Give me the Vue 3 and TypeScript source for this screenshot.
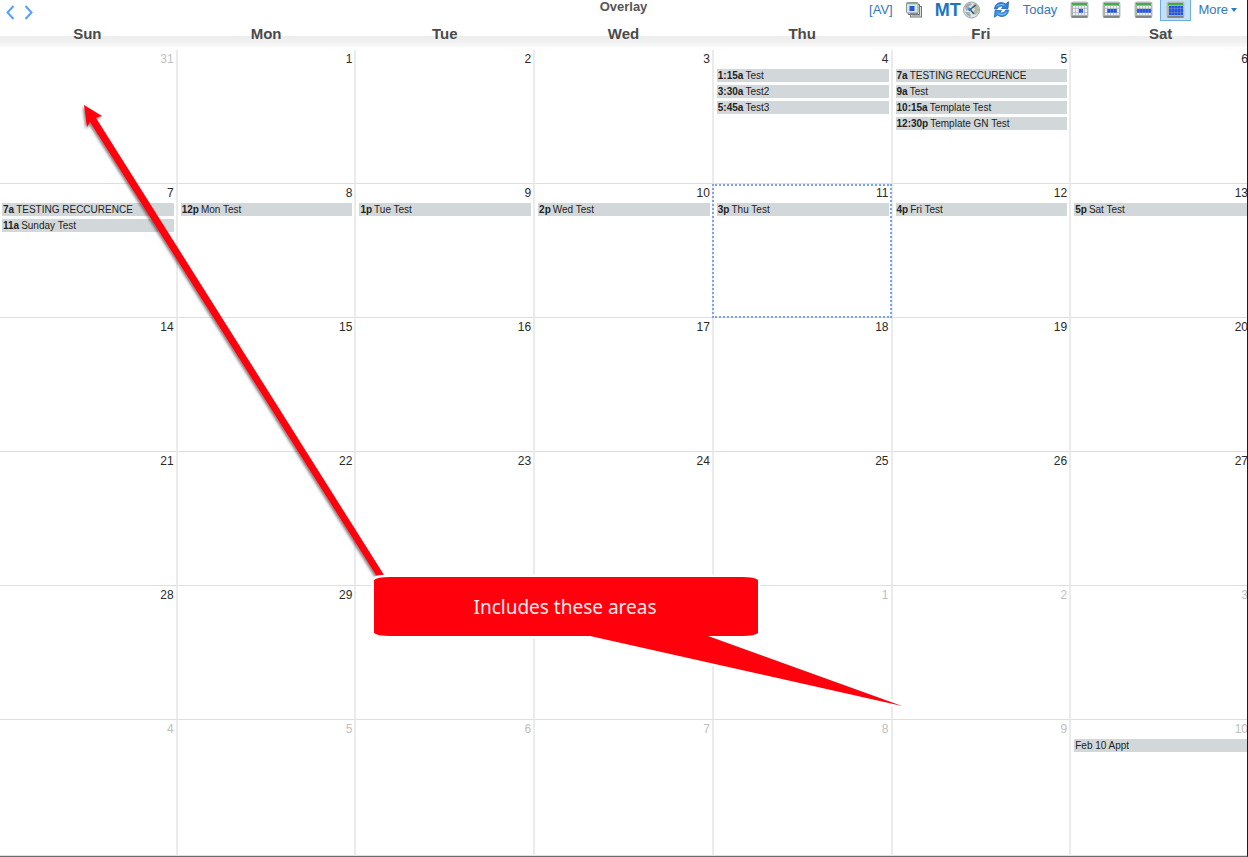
<script setup lang="ts">
interface CalendarEvent {
  time?: string
  title: string
}

interface Day {
  label: string
  outside: boolean
  today: boolean
  events: CalendarEvent[]
}

interface ViewMode {
  name: string
  from: number
  cols: number
  row: number
  rows: number
  active: boolean
}

const weekdays: string[] = ['Sun', 'Mon', 'Tue', 'Wed', 'Thu', 'Fri', 'Sat']

const eventsByCell: Record<number, CalendarEvent[]> = {
  4: [
    { time: '1:15a', title: 'Test' },
    { time: '3:30a', title: 'Test2' },
    { time: '5:45a', title: 'Test3' },
  ],
  5: [
    { time: '7a', title: 'TESTING RECCURENCE' },
    { time: '9a', title: 'Test' },
    { time: '10:15a', title: 'Template Test' },
    { time: '12:30p', title: 'Template GN Test' },
  ],
  7: [
    { time: '7a', title: 'TESTING RECCURENCE' },
    { time: '11a', title: 'Sunday Test' },
  ],
  8: [{ time: '12p', title: 'Mon Test' }],
  9: [{ time: '1p', title: 'Tue Test' }],
  10: [{ time: '2p', title: 'Wed Test' }],
  11: [{ time: '3p', title: 'Thu Test' }],
  12: [{ time: '4p', title: 'Fri Test' }],
  13: [{ time: '5p', title: 'Sat Test' }],
  41: [{ title: 'Feb 10 Appt' }],
}

const monthLength = 31

// Days whose number lies behind the callout box.
const covered = [30, 31]

function labelOf(cell: number): string {
  if (covered.includes(cell)) return ''
  if (cell < 1) return '31'
  return String(cell > monthLength ? cell - monthLength : cell)
}

function makeDay(cell: number): Day {
  return {
    label: labelOf(cell),
    outside: cell < 1 || cell > monthLength,
    today: cell === 11,
    events: eventsByCell[cell] ?? [],
  }
}

const weeks: Day[][] = Array.from({ length: 6 }, (_, w) =>
  Array.from({ length: 7 }, (_, d) => makeDay(w * 7 + d)),
)

const views: ViewMode[] = [
  { name: 'Day view', from: 9, cols: 4, row: 8, rows: 4, active: false },
  { name: 'Work week view', from: 5, cols: 10, row: 8, rows: 4, active: false },
  { name: 'Week view', from: 3, cols: 14, row: 8, rows: 4, active: false },
  { name: 'Month view', from: 3, cols: 14, row: 5, rows: 9, active: true },
]
</script>

<template>
  <main class="page">
    <header class="toolbar">
      <nav class="nav" aria-label="Month">
        <button type="button" aria-label="Previous month">
          <svg width="9" height="15" viewBox="0 0 9 15"><path d="M7.5 1 1.5 7.5l6 6.5" /></svg>
        </button>
        <button type="button" aria-label="Next month">
          <svg width="9" height="15" viewBox="0 0 9 15"><path d="M1.5 1l6 6.5-6 6.5" /></svg>
        </button>
      </nav>
      <h1 class="title">Overlay</h1>
      <div class="tools">
        <div class="group left-group">
          <a href="#av">[AV]</a>
          <button type="button" aria-label="Overlay calendars">
            <svg width="18" height="17" viewBox="0 0 18 17">
              <rect x="5.5" y="5.5" width="11" height="10.500" fill="#dfe8df" stroke="#6c7475" />
              <path d="M7 14h8" stroke="#5e8f6a" />
              <rect x="3.5" y="3.5" width="11" height="10" fill="#e6ede6" stroke="#747b7d" />
              <path d="M5 12.500h8" stroke="#6e9075" />
              <rect x="1.500" y="1.500" width="11.500" height="10.500" rx="1" fill="#dfe5e3" stroke="#8b9496" />
              <path d="M2 2.500h10.500" stroke="#6fbf6f" stroke-width="1.4" />
              <rect x="4.500" y="5" width="5" height="5" fill="#2358dc" />
            </svg>
          </button>
          <button type="button" class="zone" aria-label="MT time zone">
            <span>MT</span>
            <svg width="19" height="19" viewBox="0 0 19 19">
              <circle cx="9.500" cy="10" r="8" fill="#dfe6ea" stroke="#98a2aa" />
              <path d="M3 6Q6 2.500 9 3l1 2-3 1 1 3-4 2zM3 12l4 0 2 3-1 2Q4 15 3 12z" fill="#9fadb4" />
              <path d="M12 3q5 2 5 7-1 4-4 5l-2-3 2-3-3-2z" fill="#b4bba0" />
              <path d="M8 9.500 14 5M8 9.500l4 4.500" stroke="#375777" stroke-width="1.500" />
              <circle cx="8" cy="9.500" r="1.800" fill="#3b78b6" />
            </svg>
          </button>
          <button type="button" aria-label="Refresh">
            <svg width="17" height="17" viewBox="0 0 17 17">
              <path
                d="M1.500 8Q2 2 8 1.500q2.500 0 4.500 1.500L15.500.800 15 7.500H8.500l2-2Q6 4 4 8z"
                fill="#2f83de"
                stroke="#1d60b8"
                stroke-width=".8"
              />
              <path
                d="M15.500 9Q15 15 9 15.500q-2.500 0-4.500-1.500L1.500 16.200 2 9.500h6.500l-2 2Q11 13 13 9z"
                fill="#3f95ea"
                stroke="#1d60b8"
                stroke-width=".8"
              />
              <path d="M3.500 5.500Q6 2.500 11.500 4.200M13.500 11.500Q11 14.500 5.500 12.800" stroke="#8dc8ff" />
            </svg>
          </button>
        </div>
        <div class="group">
          <a href="#today">Today</a>
          <button
            v-for="view in views"
            :key="view.name"
            type="button"
            :class="{ active: view.active }"
            :aria-label="view.name"
            :aria-pressed="view.active"
          >
            <svg width="19" height="17" viewBox="0 0 19 17">
              <rect x="1" y="1" width="17" height="15.500" rx="1.500" fill="#a9aeaf" stroke="#b9bebf" />
              <path d="M1.500 16h16" stroke="#737879" stroke-width="1.500" />
              <rect x="3" y="5" width="14" height="9" fill="#eceeed" />
              <path d="M2 3h15" stroke="#3faf45" stroke-width="2" />
              <rect :x="view.from" :y="view.row" :width="view.cols" :height="view.rows" fill="#1c55f2" />
              <path
                d="M5.500 5v9M8.500 5v9M11.500 5v9M14.500 5v9M3 7.500h14M3 11.500h14"
                stroke="#8b98b4"
                stroke-width=".8"
                opacity=".6"
              />
            </svg>
          </button>
          <button type="button" class="more">
            More
            <svg width="6" height="4" viewBox="0 0 6 4"><path d="M0 0h6L3 4z" fill="#2b7bc4" /></svg>
          </button>
        </div>
      </div>
    </header>

    <div class="month">
      <table>
        <thead>
          <tr>
            <th v-for="name in weekdays" :key="name" scope="col">{{ name }}</th>
          </tr>
        </thead>
        <tbody>
          <tr v-for="(week, w) in weeks" :key="w">
            <td v-for="(day, d) in week" :key="d" :class="{ outside: day.outside, today: day.today }">
              <div class="number">{{ day.label }}</div>
              <ul v-if="day.events.length">
                <li v-for="event in day.events" :key="event.title">
                  <b v-if="event.time">{{ event.time }}</b>
                  <span>{{ event.title }}</span>
                </li>
              </ul>
            </td>
          </tr>
        </tbody>
      </table>
    </div>

    <svg class="notes" viewBox="0 0 1248 857">
      <defs>
        <filter id="arrow-shadow" x="-5%" y="-5%" width="110%" height="110%">
          <feDropShadow dx="-1" dy="2" stdDeviation="1.500" flood-color="#000" flood-opacity=".55" />
        </filter>
      </defs>
      <path
        d="M84 105 102 116 96 118 384 575H376L90 122 87 127z"
        fill="#ff000c"
        filter="url(#arrow-shadow)"
      />
      <path
        d="M390 577H742Q755 577 758 580V633Q755 636 742 636H708L902 706 590 636H390Q377 636 374 633V580Q377 577 390 577z"
        fill="#ff000c"
        stroke="#fff"
        stroke-width="5"
        paint-order="stroke"
      />
      <text x="565" y="614" text-anchor="middle">Includes these areas</text>
    </svg>
  </main>
</template>

<style>
body {
  margin: 0;
  background: #fff;
}
</style>

<style scoped>
.page {
  position: relative;
  box-sizing: border-box;
  display: flex;
  flex-direction: column;
  height: 100vh;
  overflow: hidden;
  border-right: 1px solid #1c1c1c;
  border-bottom: 1px solid #6b6b6b;
  background: #fff;
  font-family: "Liberation Sans", Arial, sans-serif;
}

.toolbar {
  display: grid;
  grid-template-columns: 1fr auto 1fr;
  height: 22px;
  flex: none;
}

button {
  display: flex;
  align-items: center;
  padding: 0;
  border: 0;
  background: none;
  font: inherit;
  color: inherit;
  cursor: pointer;
}

svg {
  display: block;
  flex: none;
  fill: none;
}

.nav {
  display: flex;
  align-items: flex-start;
  gap: 9px;
  padding: 5px 0 0 6px;
}

.nav path {
  stroke: #5a9ff2;
  stroke-width: 2;
}

.title {
  margin: 0;
  font-size: 13px;
  line-height: 13px;
  color: #555;
}

.tools {
  display: flex;
  justify-content: flex-end;
  gap: 13px;
  height: 19px;
  padding-right: 10px;
  font-size: 13px;
  color: #3179bd;
}

.group {
  display: flex;
  align-items: center;
  gap: 13px;
}

.left-group {
  gap: 12px;
}

a {
  color: inherit;
  text-decoration: none;
}

.zone {
  gap: 1px;
  font-size: 18px;
  line-height: 20px;
  font-weight: 700;
  color: #1b74c3;
}

.active {
  height: 23px;
  margin: 0 -6px;
  padding: 0 5px;
  border: 1px solid #6caedd;
  background: #c4e0f6;
}

.more {
  gap: 3px;
}

.month {
  flex: 1;
  min-height: 0;
}

table {
  width: calc(100% + 4px);
  margin-left: -1px;
  border-collapse: separate;
  border-spacing: 0;
  table-layout: fixed;
}

thead tr {
  background: linear-gradient(#fff 14px, #ededed 14px, #f0f0f0 20px, #fff 27px);
}

th {
  height: 28px;
  box-sizing: border-box;
  padding: 3px 2px 0 0;
  vertical-align: top;
  font-size: 15px;
  line-height: 18px;
  color: #4a4a4a;
}

th:last-child {
  padding-right: 0;
}

td {
  position: relative;
  box-sizing: border-box;
  height: calc((100vh - 53px) / 6);
  padding: 0;
  vertical-align: top;
  border-right: 2px solid #ebebeb;
  border-bottom: 1px solid #dedede;
}

tr:last-child td {
  height: calc((100vh - 53px) / 6 + 2px);
}

td:last-child {
  border-right: 0;
}

.number {
  min-height: 14px;
  padding: 2px 2px 0 0;
  font-size: 12px;
  line-height: 14px;
  text-align: right;
  color: #2a2a2a;
}

.outside .number {
  color: #c0c0c0;
}

.today::after {
  content: "";
  position: absolute;
  inset: 0 -1px -1px -2px;
  border: 2px dotted #7ba3ee;
}

ul {
  display: flex;
  flex-direction: column;
  gap: 3px;
  margin: 3px 2px 0 3px;
  padding: 0;
  list-style: none;
}

td:last-child ul {
  margin-right: 0;
}

li {
  display: flex;
  gap: 2px;
  padding-left: 1px;
  background: #d2d8da;
  font-size: 10px;
  line-height: 13px;
  white-space: nowrap;
  color: #222;
}

.notes {
  position: absolute;
  top: 0;
  left: 0;
  width: 100vw;
  height: 100vh;
  pointer-events: none;
}

.notes text {
  font-family: "Noto Sans", "Open Sans", sans-serif;
  font-size: 19px;
  fill: #ffeaea;
}
</style>
